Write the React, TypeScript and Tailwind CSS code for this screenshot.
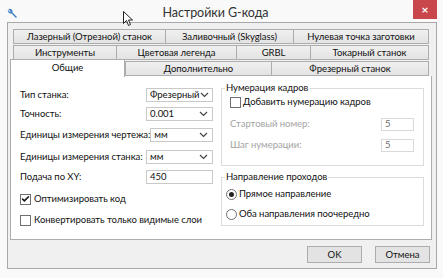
import { Check } from 'lucide-react'

// ---------------------------------------------------------------------------
// Small pieces
// ---------------------------------------------------------------------------

function Chevron() {
  return (
    <svg width="9" height="6" viewBox="0 0 9 6" className="shrink-0">
      <path d="M1 1 L4.5 4.5 L8 1" fill="none" stroke="#444" strokeWidth="1.2" />
    </svg>
  )
}

function Select({ value }: { value: string }) {
  return (
    <div className="flex h-[14px] w-[67px] items-center justify-between border border-[#c9c9c9] bg-white pl-[3px] pr-[4px] leading-none">
      <span>{value}</span>
      <Chevron />
    </div>
  )
}

function Box({ checked = false }: { checked?: boolean }) {
  return (
    <span className="flex size-[11px] shrink-0 items-center justify-center border border-[#707070] bg-white">
      {checked && <Check className="size-[10px] text-[#111]" strokeWidth={4} />}
    </span>
  )
}

function Radio({ checked = false }: { checked?: boolean }) {
  return (
    <span className="flex size-[11px] shrink-0 items-center justify-center rounded-full border border-[#707070] bg-white">
      {checked && <span className="size-[5px] rounded-full bg-[#222]" />}
    </span>
  )
}

function Tab({ label, w, active = false }: { label: string; w: number; active?: boolean }) {
  return (
    <div
      style={{ width: w }}
      className={
        active
          ? 'flex h-[18px] items-center justify-center border border-b-0 border-[#adadad] bg-white pb-[2px]'
          : 'flex h-[15px] items-center justify-center border border-l-0 border-[#adadad] bg-gradient-to-b from-[#f0f0f0] to-[#e3e3e3] first:border-l'
      }
    >
      {label}
    </div>
  )
}

// ---------------------------------------------------------------------------
// Main component
// ---------------------------------------------------------------------------

export default function App() {
  return (
    <div className="relative h-[278px] w-[443px] overflow-hidden whitespace-nowrap bg-[#f9f9f9] font-['Lato',sans-serif] text-[9.5px] leading-[14px] tracking-[-0.05px] text-[#111]">
      {/* Title bar */}
      <div className="relative flex h-[22px] items-center">
        <svg width="12" height="13" viewBox="0 0 12 13" className="ml-[6px] mt-[4px]">
          <path d="M2 2.5 a3 3 0 0 0 3.5 4 L10 11 L11 10 L6.5 5.5 a3 3 0 0 0 -4 -3.5 L4.5 4.5 L3.5 5 Z" fill="#3f7fc4" />
        </svg>
        <div className="flex-1 pt-[4px] text-center text-[12.5px] text-[#333]">Настройки G-кода</div>
        <div className="mr-[6px] flex h-[19px] w-[24px] items-center justify-center self-start bg-[#c9474b] text-[12px] font-bold text-white">
          ×
        </div>
      </div>

      {/* Client area */}
      <div className="ml-[7px] mr-[6px] h-[247px] border border-[#a8a8a8] bg-[#f0f0f0] pl-[2px] pr-[4px] pt-[6px]">
        <div className="pl-[3px] pr-[2px]">
          <div className="flex">
            <Tab label="Лазерный (Отрезной) станок" w={153} />
            <Tab label="Заливочный (Skyglass)" w={128} />
            <Tab label="Нулевая точка заготовки" w={135} />
          </div>
          <div className="mt-px flex">
            <Tab label="Инструменты" w={104} />
            <Tab label="Цветовая легенда" w={120} />
            <Tab label="GRBL" w={74} />
            <Tab label="Токарный станок" w={118} />
          </div>
        </div>
        <div className="-mt-[1px] flex items-end pr-[2px]">
          <Tab label="Общие" w={115} active />
          <div className="flex h-[16px] flex-1">
            <Tab label="Дополнительно" w={147} />
            <Tab label="Фрезерный станок" w={157} />
          </div>
        </div>

        {/* Panel */}
        <div className="-mt-px flex h-[164px] border border-t-0 border-[#adadad] bg-white pl-[9px] pt-[12px]">
          {/* Left column */}
          <div className="w-[193px]">
            <div className="flex flex-col">
              <div className="flex items-center justify-between"><span>Тип станка:</span><Select value="Фрезерный" /></div>
              <div className="mt-[5px] flex items-center justify-between"><span>Точность:</span><Select value="0.001" /></div>
              <div className="mt-[7px] flex items-center justify-between"><span>Единицы измерения чертежа:</span><Select value="мм" /></div>
              <div className="mt-[8px] flex items-center justify-between"><span>Единицы измерения станка:</span><Select value="мм" /></div>
              <div className="mt-[6px] flex items-center justify-between">
                <span>Подача по XY:</span>
                <div className="flex h-[14px] w-[67px] items-center border border-[#c9c9c9] pl-[3px] leading-none">450</div>
              </div>
            </div>
            <div className="mt-[8px] flex items-center gap-[3px]"><Box checked />Оптимизировать код</div>
            <div className="mt-[7px] flex items-center gap-[3px]"><Box />Конвертировать только видимые слои</div>
          </div>

          {/* Right column */}
          <div className="ml-[8px] w-[203px]">
            <fieldset className="-mt-[7px] h-[85px] border border-[#dcdcdc] pl-[8px]">
              <legend className="-ml-[5px] px-[1px] leading-[14px]">Нумерация кадров</legend>
              <div className="flex items-center gap-[2px]"><Box />Добавить нумерацию кадров</div>
              <div className="mt-[8px] flex items-center justify-between pr-[9px] text-[#a3a3a3]">
                <span>Стартовый номер:</span>
                <div className="flex h-[13px] w-[33px] items-center border border-[#d9d9d9] pl-[3px] text-[#6d6d6d]">5</div>
              </div>
              <div className="mt-[7px] flex items-center justify-between pr-[9px] text-[#a3a3a3]">
                <span>Шаг нумерации:</span>
                <div className="flex h-[13px] w-[33px] items-center border border-[#d9d9d9] pl-[3px] text-[#6d6d6d]">5</div>
              </div>
            </fieldset>
            <fieldset className="mt-[4px] h-[56px] border border-[#dcdcdc] pl-[4px]">
              <legend className="-ml-[1px] px-[1px] leading-[14px]">Направление проходов</legend>
              <div className="mt-[3px] flex items-center gap-[2px]"><Radio checked />Прямое направление</div>
              <div className="mt-[6px] flex items-center gap-[2px]"><Radio />Оба направления поочередно</div>
            </fieldset>
          </div>
        </div>

        {/* Buttons */}
        <div className="mt-[6px] flex justify-end gap-[13px] pr-[2px]">
          <button className="h-[17px] w-[55px] border border-[#adadad] bg-[#e3e3e3] leading-none">OK</button>
          <button className="h-[17px] w-[55px] border border-[#adadad] bg-[#e3e3e3] leading-none">Отмена</button>
        </div>
      </div>

      {/* Mouse cursor */}
      <svg width="11" height="16" viewBox="0 0 11 16" className="absolute left-[123px] top-[11px]">
        <path d="M0.5 0.5 L0.5 12.5 L3.5 9.5 L5.5 14.5 L7.5 13.5 L5.5 9 L9.5 9 Z" fill="white" stroke="#222" strokeWidth="1" />
      </svg>
    </div>
  )
}
